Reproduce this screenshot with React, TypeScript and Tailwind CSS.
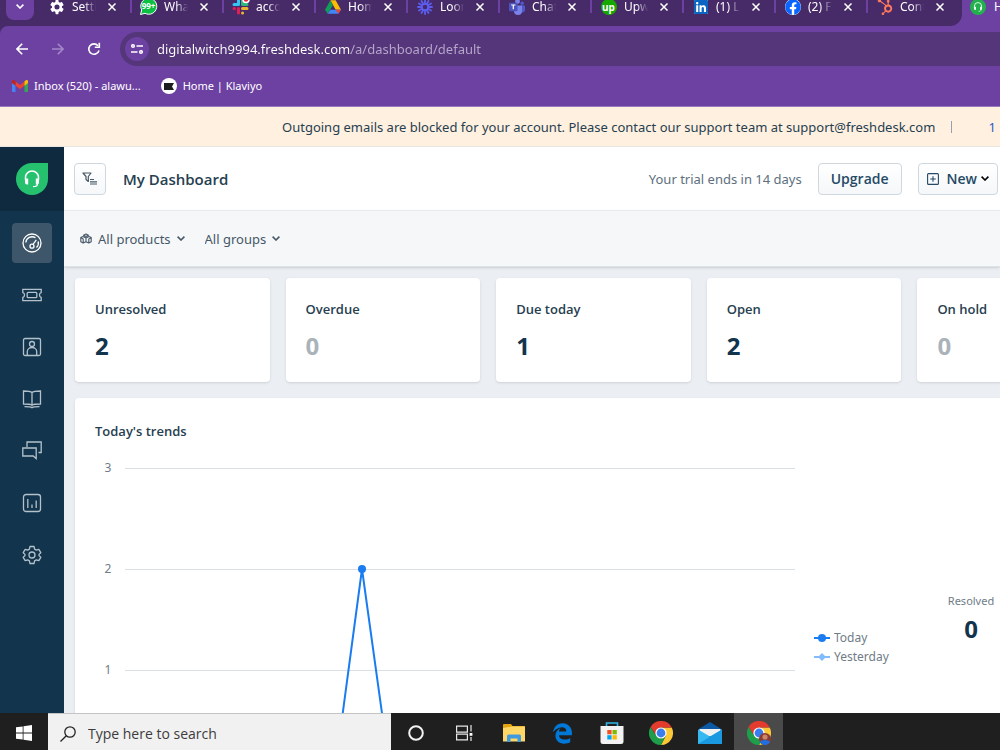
import type { ReactNode } from "react";
import { FaEdgeLegacy, FaFacebook, FaHubspot, FaLinkedin } from "react-icons/fa";

/* ---------- tab favicons ---------- */

const GearIcon = () => (
  <svg viewBox="0 0 24 24" className="size-4 fill-white">
    <path
      fillRule="evenodd"
      d="M19.4 13a7.500 7.500 0 0 0 0-2l2.300-1.800c.2-.2.3-.5.1-.7l-2.200-3.800c-.1-.2-.4-.3-.7-.2l-2.700 1.100a8 8 0 0 0-1.700-1L14.100 1.700a.5.5 0 0 0-.5-.4H10.400a.5.5 0 0 0-.5.4L9.500 4.600a8 8 0 0 0-1.700 1L5.100 4.500c-.3-.1-.5 0-.7.2L2.200 8.500c-.1.200-.1.500.1.700L4.600 11a7.500 7.500 0 0 0 0 2l-2.300 1.800c-.2.2-.3.5-.1.7l2.200 3.800c.1.200.4.3.7.2l2.700-1.100a8 8 0 0 0 1.700 1l.4 2.900c0 .2.200.4.500.4h3.200c.3 0 .5-.2.500-.4l.4-2.900a8 8 0 0 0 1.700-1l2.700 1.100c.3.1.6 0 .7-.2l2.200-3.800c.1-.2.1-.5-.1-.7zM12 15.800a3.800 3.800 0 1 1 0-7.600 3.800 3.800 0 0 1 0 7.600z"
    />
  </svg>
);

const WhatsAppIcon = () => (
  <svg viewBox="0 0 17 17" className="size-[17px] overflow-visible">
    <path d="M.5 16.500 1.700 12A8 8 0 1 1 5 15.300z" fill="#0bbf45" stroke="#fff" strokeWidth="1" />
    <text x="8.500" y="11" textAnchor="middle" fontSize="8" fontWeight="700" fill="#fff" fontFamily="Open Sans, sans-serif">
      99+
    </text>
  </svg>
);

const SlackIcon = () => (
  <svg viewBox="0 0 17 17" className="size-[17px] overflow-visible">
    <g strokeWidth="3" strokeLinecap="round" fill="none">
      <path d="M6.500 2v4.500M2 6.500h4.500" stroke="#36c5f0" />
      <path d="M10.500 2v4.500M10.500 6.500H15" stroke="#2eb67d" />
      <path d="M10.500 10.500H15M10.500 15h.1" stroke="#ecb22e" />
      <path d="M6.500 10.500V15M2 10.500h.5" stroke="#e01e5a" />
    </g>
    <circle cx="14" cy="1.500" r="3" fill="#e8203a" stroke="#fff" strokeWidth="1.500" />
  </svg>
);

const DriveIcon = () => (
  <svg viewBox="0 0 24 22" className="size-4">
    <path d="M8 1h8l8 14h-8z" fill="#fbbc04" />
    <path d="M8 1l4 7-8 13-4-6z" fill="#0f9d58" />
    <path d="M4 21l4-6h16l-4 6z" fill="#4285f4" />
    <path d="M16 15h8l-4 6z" fill="#ea4335" />
  </svg>
);

const spokes = [0, 30, 60, 90, 120, 150, 180, 210, 240, 270, 300, 330];

const LoomIcon = () => (
  <svg viewBox="0 0 16 16" className="size-4">
    <g stroke="#5b5ef0" strokeWidth="1.800" strokeLinecap="round" fill="none">
      {spokes.map((a) => (
        <path key={a} d="M8 1v3.500" transform={`rotate(${a} 8 8)`} />
      ))}
      <circle cx="8" cy="8" r="3.200" />
    </g>
  </svg>
);

const TeamsIcon = () => (
  <svg viewBox="0 0 16 16" className="size-4">
    <circle cx="13.200" cy="4.200" r="1.700" fill="#5059c9" />
    <circle cx="8.500" cy="2.500" r="2.400" fill="#7b83eb" />
    <path d="M11.500 6.500H16V11a2.500 2.500 0 0 1-4.500 1.500z" fill="#5059c9" />
    <path d="M5 6.500h8V12a4 4 0 0 1-8 0z" fill="#7b83eb" />
    <rect x="0" y="3.800" width="8.500" height="8.500" rx="1" fill="#4b53bc" />
    <path d="M2.200 6h4.200M4.300 6v4.300" stroke="#fff" strokeWidth="1.200" />
  </svg>
);

const UpworkIcon = () => (
  <span className="flex size-4 items-center justify-center rounded-full bg-[#14a800] text-[10px] leading-none font-bold text-white">
    up
  </span>
);

const LinkedInIcon = () => (
  <span className="flex size-[14px] items-center justify-center bg-white">
    <FaLinkedin className="size-4 shrink-0 text-[#0a66c2]" />
  </span>
);

const FacebookIcon = () => (
  <span className="flex size-4 items-center justify-center rounded-full bg-white">
    <FaFacebook className="size-4 text-[#0866ff]" />
  </span>
);

const Headset = ({ className }: { className: string }) => (
  <svg viewBox="0 0 16 18" className={className} fill="none">
    <path d="M1.500 10V7.500a6.500 6.500 0 0 1 13 0V10" stroke="#fff" strokeWidth="1.500" />
    <path d="M1 8.500h3.200v6H3a2 2 0 0 1-2-2zM15 8.500h-3.200v6H13a2 2 0 0 0 2-2z" fill="#fff" />
    <path d="M13.500 14c0 2-1.500 2.700-4.500 2.700" stroke="#fff" strokeWidth="1.200" />
  </svg>
);

const CloseIcon = () => (
  <svg viewBox="0 0 8 8" className="size-2" stroke="#fff" strokeWidth="1.500">
    <path d="M.5.5l7 7M7.500.5l-7 7" />
  </svg>
);

const tabs: { title: string; icon: ReactNode }[] = [
  { title: "Settings", icon: <GearIcon /> },
  { title: "WhatsApp", icon: <WhatsAppIcon /> },
  { title: "account", icon: <SlackIcon /> },
  { title: "Home", icon: <DriveIcon /> },
  { title: "Loom", icon: <LoomIcon /> },
  { title: "Chat", icon: <TeamsIcon /> },
  { title: "Upwork", icon: <UpworkIcon /> },
  { title: "(1) LinkedIn", icon: <LinkedInIcon /> },
  { title: "(2) Facebook", icon: <FacebookIcon /> },
  { title: "Contacts", icon: <FaHubspot className="size-4 text-[#ff7a59]" /> },
];

function TabStrip() {
  return (
    <div className="flex h-[26px] shrink-0 overflow-hidden bg-[#6d41a1]">
      <div className="flex shrink-0 rounded-br-xl bg-[#472a68] pr-[2px]">
        <button aria-label="Search tabs" className="ml-[6px] flex h-5 w-7 items-start justify-center rounded-b-lg bg-[#6d41a1] pt-1">
          <svg viewBox="0 0 8 5" className="h-[5px] w-2" fill="none" stroke="#fff" strokeWidth="1.600">
            <path d="M.6.6 4 4 7.400.6" />
          </svg>
        </button>
        <div className="ml-[6px] flex h-[13px]">
          {tabs.map((t, i) => (
            <div
              key={t.title}
              className={`flex w-[92px] shrink-0 items-center pl-2 ${i < tabs.length - 1 ? "border-r-2 border-[#6d41a1]" : ""}`}
            >
              <span className="flex w-[17px] shrink-0 justify-center">{t.icon}</span>
              <span className="ml-[7px] w-6 shrink-0 overflow-hidden text-xs leading-5 whitespace-nowrap text-white [mask-image:linear-gradient(to_right,#000_50%,transparent)]">
                {t.title}
              </span>
              <button aria-label={`Close ${t.title}`} className="ml-3">
                <CloseIcon />
              </button>
            </div>
          ))}
        </div>
      </div>
      <div className="flex h-[13px] items-center pl-2">
        <span className="flex size-4 shrink-0 items-center justify-center rounded-full bg-[#22b14c]">
          <Headset className="size-[10px]" />
        </span>
        <span className="ml-2 text-xs leading-5 whitespace-nowrap text-white">Helpdesk</span>
      </div>
    </div>
  );
}

function Toolbar() {
  return (
    <div className="shrink-0 bg-[#472a68]">
      <div className="h-[81px] rounded-tl-lg border-b border-[#9a7bc0] bg-[#6d41a1] pt-[6px]">
        <div className="flex h-[34px] items-center">
          <button aria-label="Back" className="ml-4">
            <svg viewBox="0 0 12 12" className="size-3" fill="none" stroke="#fff" strokeWidth="1.600">
              <path d="M12 6H1M6.200.8 1 6l5.200 5.200" />
            </svg>
          </button>
          <button aria-label="Forward" className="ml-6">
            <svg viewBox="0 0 12 12" className="size-3" fill="none" stroke="#a487c8" strokeWidth="1.600">
              <path d="M0 6h11M5.800.8 11 6l-5.200 5.200" />
            </svg>
          </button>
          <button aria-label="Reload" className="ml-6">
            <svg viewBox="0 0 12 12" className="size-3 overflow-visible" fill="none" stroke="#fff" strokeWidth="1.600">
              <path d="M11 7.500A5.200 5.200 0 1 1 10 2.700" />
              <path d="M11.300-.2v4.500H6.800" />
            </svg>
          </button>
          <div className="ml-5 flex h-full flex-1 items-center rounded-l-full bg-[#55367a] pl-[5px]">
            <button aria-label="Site information" className="flex size-6 items-center justify-center rounded-full bg-[#6d41a1]">
              <svg viewBox="0 0 12 12" className="size-3" fill="none" stroke="#fff" strokeWidth="1.500">
                <circle cx="2" cy="3" r="1.300" />
                <path d="M5.500 3H12M0 9h6.500" />
                <circle cx="10" cy="9" r="1.300" />
              </svg>
            </button>
            <input
              aria-label="Address"
              defaultValue="digitalwitch9994.freshdesk.com/a/dashboard/default"
              className="ml-2 flex-1 bg-linear-to-r from-white from-[194px] to-[#b8a8cc] to-[194px] bg-clip-text text-[13px] leading-5 text-transparent outline-none"
            />
          </div>
        </div>
        <div className="flex h-10 items-center text-[11px] leading-5 text-white">
          <a href="#inbox" className="ml-3 flex items-center gap-[6px]">
            <svg viewBox="0 0 16 12" className="h-3 w-4">
              <path d="M0 1.500 3.500 4v8H1a1 1 0 0 1-1-1z" fill="#4285f4" />
              <path d="M16 1.500 12.500 4v8H15a1 1 0 0 0 1-1z" fill="#34a853" />
              <path d="M3.500 1.500 8 5l4.500-3.500V5.700L8 9 3.500 5.700z" fill="#ea4335" />
              <path d="M0 1.500C0 0 1.500-.3 2.500.5l1 1v4.200L0 3z" fill="#c5221f" />
              <path d="M16 1.500c0-1.500-1.500-1.800-2.500-1l-1 1v4.200L16 3z" fill="#fbbc04" />
            </svg>
            Inbox (520) - alawu...
          </a>
          <a href="#klaviyo" className="ml-5 flex items-center gap-[6px]">
            <span className="flex size-4 items-center justify-center rounded-full bg-white">
              <svg viewBox="0 0 10 7" className="h-[7px] w-[10px]">
                <path d="M0 0h10L8 3.500 10 7H0z" fill="#1d1d1d" />
              </svg>
            </span>
            Home | Klaviyo
          </a>
        </div>
      </div>
    </div>
  );
}

/* ---------- application sidebar ---------- */

const navItems: { label: string; icon: ReactNode }[] = [
  {
    label: "Dashboard",
    icon: (
      <>
        <circle cx="10" cy="10" r="9" />
        <path d="M3.800 9.500a6.300 6.300 0 0 1 9.700-4.700M16.200 8.500a6.300 6.300 0 0 1-1.700 6" />
        <circle cx="10" cy="13.200" r="2" />
        <path d="M11 11.500 14.300 6.800" />
      </>
    ),
  },
  {
    label: "Tickets",
    icon: (
      <>
        <path d="M.8 4.300h18.400v3.300c-2.300.6-2.300 4.200 0 4.800v3.300H.8v-3.300c2.300-.6 2.300-4.200 0-4.800z" />
        <rect x="5.200" y="7.300" width="9.600" height="5.400" rx="1" />
      </>
    ),
  },
  {
    label: "Contacts",
    icon: (
      <>
        <rect x="1.500" y="1.500" width="17" height="17" rx="1.500" />
        <circle cx="10" cy="7" r="2.500" />
        <path d="M5.300 18v-3.500a4.700 4 0 0 1 9.400 0V18" />
      </>
    ),
  },
  {
    label: "Solutions",
    icon: (
      <>
        <path d="M10 3.500C8.500 2 6 2 1.500 2v13c4.500 0 7 0 8.500 1.200C11.500 15 14 15 18.500 15V2C14 2 11.500 2 10 3.500zM10 3.500v12.500" />
        <path d="M2.500 17.600c4 0 6 0 7.500 1 1.500-1 3.500-1 7.500-1" />
      </>
    ),
  },
  {
    label: "Forums",
    icon: (
      <>
        <path d="M5 6V1h14.200v10.500H16.500" />
        <path d="M.8 7h13.400v10.500L11.200 15H.8z" />
      </>
    ),
  },
  {
    label: "Analytics",
    icon: (
      <>
        <rect x="1.500" y="1.500" width="17" height="17" rx="2.500" />
        <path d="M5.800 6v9M10 11.500V15M14.200 7.500V15" />
      </>
    ),
  },
  {
    label: "Admin",
    icon: (
      <>
        <path d="M8 1.500h4l.6 2.600 1.700 1 2.500-.8 2 3.400L17 9.400v1.200l1.800 1.700-2 3.400-2.500-.8-1.700 1-.6 2.600H8l-.6-2.600-1.700-1-2.500.8-2-3.400L3 10.600V9.400L1.200 7.700l2-3.400 2.500.8 1.700-1z" strokeLinejoin="round" />
        <circle cx="10" cy="10" r="3" />
      </>
    ),
  },
];

function Sidebar() {
  return (
    <nav className="w-16 shrink-0 bg-[#12344d]">
      <div className="flex h-16 items-center justify-center bg-[#0f2a3f]">
        <span className="flex size-8 items-center justify-center rounded-full rounded-tr-sm bg-[#25c16f]">
          <Headset className="h-[18px] w-4" />
        </span>
      </div>
      <div className="flex flex-col items-center gap-3 pt-3">
        {navItems.map((n, i) => (
          <button
            key={n.label}
            aria-label={n.label}
            className={`flex size-10 items-center justify-center rounded ${i === 0 ? "bg-[#3d566a] text-white" : "text-[#b4c1ca]"}`}
          >
            <svg viewBox="0 0 20 20" className="size-5" fill="none" stroke="currentColor" strokeWidth="1.300">
              {n.icon}
            </svg>
          </button>
        ))}
      </div>
    </nav>
  );
}

/* ---------- dashboard ---------- */

const Chevron = () => (
  <svg viewBox="0 0 8 5" className="h-[5px] w-2" fill="none" stroke="currentColor" strokeWidth="1.600">
    <path d="M.6.6 4 4 7.400.6" />
  </svg>
);

const buttonStyle =
  "flex h-8 items-center rounded border border-[#cfd7df] bg-linear-to-b from-white to-[#f5f7f9] font-['Open_Sans',sans-serif] text-sm font-semibold text-[#264966]";

function Header() {
  return (
    <header className="flex h-16 shrink-0 items-center border-b border-[#ebeef0] bg-white pr-[2px] pl-[10px]">
      <button aria-label="Switch dashboard" className={`${buttonStyle} w-8 justify-center`}>
        <svg viewBox="0 0 16 14" className="h-[14px] w-4" fill="none" stroke="#475867" strokeWidth="1.200">
          <path d="M1 1h8L6.300 4.500v5L4 7.500v-3z" strokeLinejoin="round" />
          <path d="M8 7.500h4M8 9.800h7M8 12h7" />
        </svg>
      </button>
      <h1 className="ml-[17px] font-['Open_Sans',sans-serif] text-[15px] leading-5 font-semibold text-[#264050]">My Dashboard</h1>
      <span className="ml-auto text-[13px] leading-5 whitespace-nowrap text-[#5d6f7e]">Your trial ends in 14 days</span>
      <button className={`${buttonStyle} ml-4 px-3`}>Upgrade</button>
      <button className={`${buttonStyle} ml-4 gap-2 px-2`} aria-haspopup="menu">
        <svg viewBox="0 0 12 12" className="size-3" fill="none" stroke="currentColor" strokeWidth="1.100">
          <rect x=".6" y=".6" width="10.800" height="10.800" rx="1" />
          <path d="M6 3.200v5.600M3.200 6h5.600" />
        </svg>
        <span>New</span>
        <span className="-ml-1 text-black">
          <Chevron />
        </span>
      </button>
    </header>
  );
}

function Filters() {
  return (
    <div className="z-10 flex h-14 shrink-0 items-center border-b border-[#dce2e7] bg-[#f5f7f9] pl-4 text-[13px] leading-5 text-[#475867] shadow-sm">
      <svg viewBox="0 0 12 12" className="size-3" fill="none" stroke="#475867" strokeWidth="1.100" strokeLinejoin="round">
        <path d="M3.500 2.200 6 1l2.500 1.200L6 3.500zM.8 4.500l2.200-1L6 5l3-1.500 2.200 1v4.200L8.800 10 6 8.800 3.200 10 .8 8.700zM6 5v4M.8 4.800l2.400 1.200V10M11.200 4.800 8.800 6v4" />
      </svg>
      <label className="ml-[6px] flex items-center gap-[6px]">
        <select aria-label="Products" className="[field-sizing:content] appearance-none bg-transparent outline-none">
          <option>All products</option>
        </select>
        <Chevron />
      </label>
      <label className="ml-5 flex items-center gap-[6px]">
        <select aria-label="Groups" className="[field-sizing:content] appearance-none bg-transparent outline-none">
          <option>All groups</option>
        </select>
        <Chevron />
      </label>
    </div>
  );
}

const stats = [
  { label: "Unresolved", value: 2 },
  { label: "Overdue", value: 0 },
  { label: "Due today", value: 1 },
  { label: "Open", value: 2 },
  { label: "On hold", value: 0 },
];

const gridLines = [
  { label: "3", y: 24 },
  { label: "2", y: 125 },
  { label: "1", y: 226 },
  { label: "0", y: 327 },
];

function Trends() {
  return (
    <section className="rounded bg-white pt-5 pl-5 shadow-sm">
      <h2 className="font-['Open_Sans',sans-serif] text-[13px] leading-[26px] font-semibold text-[#264050]">Today's trends</h2>
      <div className="flex">
        <svg viewBox="0 0 700 340" className="h-[340px] w-[700px] shrink-0">
          {gridLines.map((g) => (
            <g key={g.label}>
              <path d={`M30 ${g.y}.5H700`} stroke="#dadfe3" strokeWidth="1" />
              <text x="13" y={g.y + 4} textAnchor="middle" fontSize="12" fill="#6f7c87">
                {g.label}
              </text>
            </g>
          ))}
          <path d="M30 327H240L267 125l28 202H700" fill="none" stroke="#1a7cf0" strokeWidth="2" strokeLinejoin="round" />
          <circle cx="267" cy="125" r="4" fill="#1a7cf0" />
        </svg>
        <ul className="ml-[19px] w-[111px] shrink-0 pt-[184px] text-xs leading-[19px] text-[#6f7c87]">
          <li className="flex items-center gap-1">
            <svg viewBox="0 0 16 8" className="h-2 w-4" fill="#1a7cf0">
              <rect y="3" width="16" height="2" />
              <circle cx="8" cy="4" r="4" />
            </svg>
            Today
          </li>
          <li className="flex items-center gap-1">
            <svg viewBox="0 0 16 8" className="h-2 w-4" fill="#82bcfc">
              <rect y="3" width="16" height="2" />
              <path d="M8 0l4 4-4 4-4-4z" />
            </svg>
            Yesterday
          </li>
        </ul>
        <div className="w-[92px] shrink-0 pt-[147px] text-center">
          <p className="text-[11px] leading-5 text-[#6f7c87]">Resolved</p>
          <p className="font-['Open_Sans',sans-serif] text-2xl leading-9 font-bold text-[#12344d]">0</p>
        </div>
      </div>
    </section>
  );
}

function Dashboard() {
  return (
    <main className="flex min-w-0 flex-1 flex-col overflow-hidden bg-[#ebeef3]">
      <Header />
      <Filters />
      <div className="min-h-0 flex-1 overflow-hidden pt-[11px] pl-[11px]">
        <div className="flex w-full min-w-[1037px] flex-col gap-4">
          <div className="grid grid-cols-5 gap-4">
            {stats.map((s) => (
              <div key={s.label} className="rounded bg-white px-5 pt-[19px] pb-5 font-['Open_Sans',sans-serif] shadow-sm">
                <p className="text-[13px] leading-6 font-semibold text-[#264050]">{s.label}</p>
                <p className={`mt-[9px] text-2xl leading-8 font-bold ${s.value ? "text-[#12344d]" : "text-[#aab3ba]"}`}>{s.value}</p>
              </div>
            ))}
          </div>
          <Trends />
        </div>
      </div>
    </main>
  );
}

/* ---------- taskbar ---------- */

const ChromeIcon = ({ children }: { children?: ReactNode }) => (
  <svg viewBox="0 0 24 24" className="size-6">
    <path d="M12 6.500h10.700A12 12 0 0 1 12 24l4.800-9.200z" fill="#fcc934" />
    <path d="M1.600 6 7.200 14.800 12 17.500 16 16 12 24A12 12 0 0 1 1.600 6z" fill="#1e9e4a" />
    <path d="M1.600 6A12 12 0 0 1 22.700 6.500H12L7 14z" fill="#e33b2e" />
    <circle cx="12" cy="12" r="5.600" fill="#fff" />
    <circle cx="12" cy="12" r="4.400" fill="#3b7ded" />
    {children}
  </svg>
);

const taskItems: { label: string; icon: ReactNode; active?: boolean }[] = [
  {
    label: "Cortana",
    icon: (
      <svg viewBox="0 0 16 16" className="size-4" fill="none" stroke="#f2f2f2" strokeWidth="2">
        <circle cx="8" cy="8" r="6.800" />
      </svg>
    ),
  },
  {
    label: "Task view",
    icon: (
      <svg viewBox="0 0 17 16" className="h-4 w-[17px]" fill="none" stroke="#e8e8e8" strokeWidth="1.200">
        <path d="M.6 1.200h10.800v6H.6zM.6 9.200h10.800v5.600H.6zM15 0v6.500M15 12v4" />
        <rect x="13.600" y="8" width="2.800" height="2.800" fill="#fff" stroke="none" />
      </svg>
    ),
  },
  {
    label: "File Explorer",
    icon: (
      <svg viewBox="0 0 22 18" className="h-[18px] w-[22px]">
        <path d="M0 1a1 1 0 0 1 1-1h7l1.500 2H21a1 1 0 0 1 1 1v14H0z" fill="#e6a50c" />
        <path d="M0 4 9 2.500h13v15H0z" fill="#ffd766" />
        <path d="M4 18v-6a1.500 1.500 0 0 1 1.500-1.500h11A1.500 1.500 0 0 1 18 12v6h-3.500v-3.500h-7V18z" fill="#3f9ae0" />
      </svg>
    ),
  },
  { label: "Edge", icon: <FaEdgeLegacy className="size-[21px] text-[#0078d7]" /> },
  {
    label: "Store",
    icon: (
      <svg viewBox="0 0 24 24" className="size-6">
        <path d="M6.500 6V2h11v4" fill="none" stroke="#2fb6e8" strokeWidth="1.600" />
        <path d="M.5 5h23v15.500A2.500 2.500 0 0 1 21 23H3a2.500 2.500 0 0 1-2.500-2.500z" fill="#f2f2f2" />
        <rect x="7.300" y="9" width="4.300" height="4.300" fill="#f25022" />
        <rect x="12.500" y="9" width="4.300" height="4.300" fill="#7fba00" />
        <rect x="7.300" y="14.200" width="4.300" height="4.300" fill="#00a4ef" />
        <rect x="12.500" y="14.200" width="4.300" height="4.300" fill="#ffb900" />
      </svg>
    ),
  },
  { label: "Chrome", icon: <ChromeIcon /> },
  {
    label: "Mail",
    icon: (
      <svg viewBox="0 0 24 22" className="h-[22px] w-6">
        <path d="M0 7.500 12 0l12 7.500V10H0z" fill="#0c59a4" />
        <path d="M1.500 7h21v7h-21z" fill="#f1f1f1" />
        <path d="M0 7.500 12 14.500 24 7.500V22H0z" fill="#36b8f0" />
        <path d="M0 22 24 7.500V22z" fill="#1a98e0" />
      </svg>
    ),
  },
  {
    label: "Chrome profile",
    active: true,
    icon: (
      <ChromeIcon>
        <circle cx="18" cy="18" r="6" fill="#8b3a35" />
        <circle cx="18" cy="16" r="2.600" fill="#c98868" />
        <path d="M13 21.300c1-3 9-3 10 0A6 6 0 0 1 13 21.300z" fill="#1f6fe0" />
      </ChromeIcon>
    ),
  },
];

function Taskbar() {
  return (
    <footer className="h-[37px] shrink-0 overflow-hidden bg-[#1f1f1f]">
      <div className="flex h-10">
        <button aria-label="Start" className="flex w-12 items-center justify-center">
          <svg viewBox="0 0 16 16" className="size-4" fill="#fff">
            <path d="M0 2.300 6.700 1.400v6.200H0zM7.500 1.200 16 0v7.600H7.500zM0 8.400h6.700v6.200L0 13.700zM7.500 8.400H16V16l-8.500-1.200z" />
          </svg>
        </button>
        <label className="flex w-[343px] items-center gap-3 border-t border-[#c4c4c4] bg-[#f1f1f1] pl-3">
          <svg viewBox="0 0 16 16" className="size-4" fill="none" stroke="#222" strokeWidth="1.300">
            <circle cx="10" cy="6" r="5.200" />
            <path d="M6.300 9.700.5 15.500" />
          </svg>
          <input
            aria-label="Search"
            placeholder="Type here to search"
            className="min-w-0 flex-1 bg-transparent font-['Open_Sans',sans-serif] text-sm leading-5 outline-none placeholder:text-[#3c3c3c]"
          />
        </label>
        {taskItems.map((t) => (
          <button
            key={t.label}
            aria-label={t.label}
            className={`flex w-[49px] items-center justify-center ${t.active ? "bg-[#4a4a4a]" : ""}`}
          >
            {t.icon}
          </button>
        ))}
      </div>
    </footer>
  );
}

export default function App() {
  return (
    <div className="flex h-screen flex-col overflow-hidden font-['Noto_Sans','Open_Sans',sans-serif]">
      <TabStrip />
      <Toolbar />
      <div className="flex h-10 shrink-0 items-center overflow-hidden border-b border-[#e8e4e0] bg-[#fff0e0] pl-[282px] text-[13px] leading-5 whitespace-nowrap text-[#264050]">
        Outgoing emails are blocked for your account. Please contact our support team at support@freshdesk.com
        <span className="ml-4 h-3 w-px shrink-0 bg-[#92a2b1]" />
        <a href="#more" className="ml-9 text-[#2c5cc5]">
          1 more
        </a>
      </div>
      <div className="flex min-h-0 flex-1">
        <Sidebar />
        <Dashboard />
      </div>
      <Taskbar />
    </div>
  );
}
